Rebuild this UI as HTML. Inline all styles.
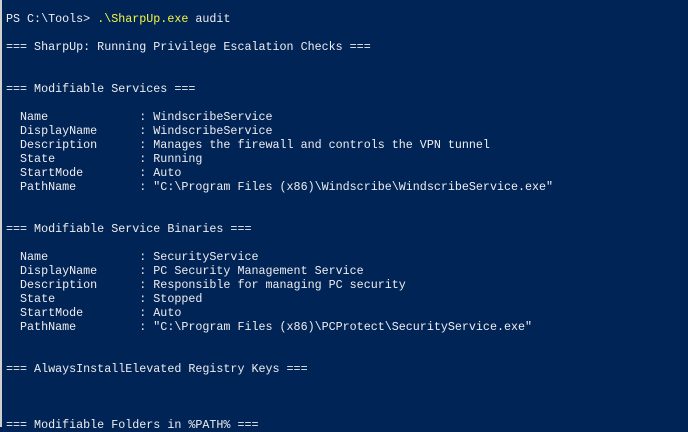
<!DOCTYPE html>
<html><head><style>
html,body{margin:0;padding:0;}
body{width:688px;height:427px;overflow:hidden;background:#012456;position:relative;}
.edge{position:absolute;left:0;top:0;width:2px;height:427px;background:#d0d0d0;}
pre{position:absolute;left:6px;top:12px;margin:0;font-family:"Liberation Mono",monospace;font-size:11.7px;line-height:14px;color:#eeedf0;white-space:pre;}
.y{color:#f5f543;}
</style></head><body>
<div class="edge"></div>
<pre>PS C:\Tools&gt; <span class="y">.\SharpUp.exe</span> audit

=== SharpUp: Running Privilege Escalation Checks ===


=== Modifiable Services ===

  Name             : WindscribeService
  DisplayName      : WindscribeService
  Description      : Manages the firewall and controls the VPN tunnel
  State            : Running
  StartMode        : Auto
  PathName         : "C:\Program Files (x86)\Windscribe\WindscribeService.exe"


=== Modifiable Service Binaries ===

  Name             : SecurityService
  DisplayName      : PC Security Management Service
  Description      : Responsible for managing PC security
  State            : Stopped
  StartMode        : Auto
  PathName         : "C:\Program Files (x86)\PCProtect\SecurityService.exe"


=== AlwaysInstallElevated Registry Keys ===



=== Modifiable Folders in %PATH% ===</pre>
</body></html>
